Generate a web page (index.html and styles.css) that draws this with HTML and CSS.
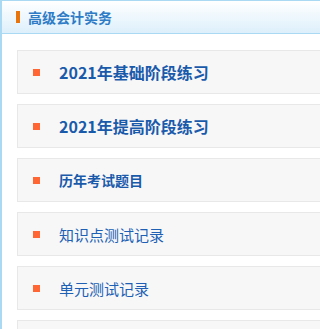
FILE: index.html
```html
<!DOCTYPE html>
<html lang="zh">
<head>
<meta charset="utf-8">
<title>高级会计实务</title>
<link rel="stylesheet" href="styles.css">
</head>
<body>
<div class="panel">
  <div class="panel-head">
    <span class="head-bar"></span>
    <span class="head-title">高级会计实务</span>
  </div>
  <ul class="menu">
    <li class="menu-item size-lg"><span class="dot"></span><span class="label">2021年基础阶段练习</span></li>
    <li class="menu-item size-lg"><span class="dot"></span><span class="label">2021年提高阶段练习</span></li>
    <li class="menu-item size-sm"><span class="dot"></span><span class="label">历年考试题目</span></li>
    <li class="menu-item size-md"><span class="dot"></span><span class="label">知识点测试记录</span></li>
    <li class="menu-item size-md"><span class="dot"></span><span class="label">单元测试记录</span></li>
    <li class="menu-item size-md"></li>
  </ul>
</div>
</body>
</html>
```

FILE: styles.css
```css
html, body {
  margin: 0;
  padding: 0;
  background: #ffffff;
  overflow: hidden;
}
body {
  font-family: "Noto Sans CJK SC", "Noto Sans", sans-serif;
}
.panel {
  height: 400px;
  border-left: 2px solid #a9d9f3;
  border-top: 1px solid #a9d9f3;
  box-sizing: border-box;
  overflow: hidden;
}
.panel-head {
  height: 32px;
  border-bottom: 1px solid #a9d9f3;
  background: linear-gradient(#ffffff, #ddeffb);
  display: flex;
  align-items: center;
  padding-left: 14px;
}
.head-bar {
  width: 4px;
  height: 12px;
  background: #e8740e;
  margin-right: 8px;
}
.head-title {
  font-size: 14px;
  font-weight: bold;
  color: #2f7cc6;
  line-height: 1;
}
.menu {
  list-style: none;
  margin: 0 -20px 0 0;
  padding: 16px 0 0 15px;
}
.menu-item {
  height: 44px;
  box-sizing: border-box;
  border: 1px solid #e8e8e8;
  background: #f7f7f7;
  margin-bottom: 10px;
  display: flex;
  align-items: center;
  padding-left: 15px;
}
.dot {
  width: 7px;
  height: 7px;
  background: #ff6633;
  margin-right: 19px;
  flex: none;
}
.label {
  color: #1a5aab;
  line-height: 1;
}
.size-lg .label {
  font-size: 16px;
  font-weight: bold;
}
.size-sm .label {
  font-size: 14px;
  font-weight: bold;
}
.size-md .label {
  font-size: 15px;
  font-weight: normal;
  color: #2060b4;
}
```
